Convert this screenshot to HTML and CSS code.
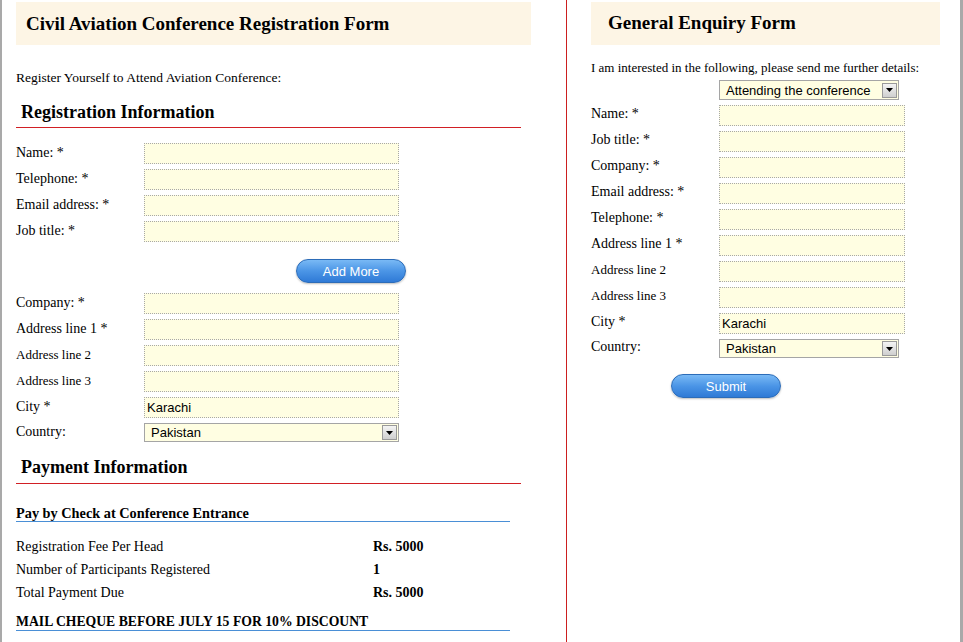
FILE: index.html
```html
<!DOCTYPE html>
<html>
<head>
<meta charset="utf-8">
<title>Civil Aviation Conference</title>
<link rel="stylesheet" href="styles.css">
</head>
<body>
<div class="page">
  <section class="panel panel-left">
    <div class="title-box"><h1>Civil Aviation Conference Registration Form</h1></div>
    <p class="intro intro-left">Register Yourself to Attend Aviation Conference:</p>
    <h2 class="section-head">Registration Information</h2>
    <div class="grid grid-left first-grid">
      <label>Name: *</label><input class="field" type="text">
      <label>Telephone: *</label><input class="field" type="text">
      <label>Email address: *</label><input class="field" type="text">
      <label>Job title: *</label><input class="field" type="text">
    </div>
    <div class="add-row"><button class="pill" type="button">Add More</button></div>
    <div class="grid grid-left">
      <label>Company: *</label><input class="field" type="text">
      <label>Address line 1 *</label><input class="field" type="text">
      <label class="small">Address line 2</label><input class="field" type="text">
      <label class="small">Address line 3</label><input class="field" type="text">
      <label>City *</label><input class="field" type="text" value="Karachi">
      <label>Country:</label>
      <div class="select"><span class="select-text">Pakistan</span><span class="arrow"><svg width="7" height="4" viewBox="0 0 7 4"><path d="M0 0h7L3.5 4z" fill="#000"/></svg></span></div>
    </div>
    <h2 class="section-head payment-head">Payment Information</h2>
    <h3 class="sub-head">Pay by Check at Conference Entrance</h3>
    <div class="pay-grid">
      <span>Registration Fee Per Head</span><b>Rs. 5000</b>
      <span>Number of Participants Registered</span><b>1</b>
      <span>Total Payment Due</span><b>Rs. 5000</b>
    </div>
    <h3 class="sub-head mail-head">MAIL CHEQUE BEFORE JULY 15 FOR 10% DISCOUNT</h3>
  </section>
  <section class="panel panel-right">
    <div class="title-box title-right"><h1>General Enquiry Form</h1></div>
    <p class="intro intro-right">I am interested in the following, please send me further details:</p>
    <div class="grid grid-right">
      <span></span>
      <div class="select select-interest"><span class="select-text">Attending the conference</span><span class="arrow"><svg width="7" height="4" viewBox="0 0 7 4"><path d="M0 0h7L3.5 4z" fill="#000"/></svg></span></div>
      <label>Name: *</label><input class="field" type="text">
      <label>Job title: *</label><input class="field" type="text">
      <label>Company: *</label><input class="field" type="text">
      <label>Email address: *</label><input class="field" type="text">
      <label>Telephone: *</label><input class="field" type="text">
      <label>Address line 1 *</label><input class="field" type="text">
      <label class="small">Address line 2</label><input class="field" type="text">
      <label class="small">Address line 3</label><input class="field" type="text">
      <label>City *</label><input class="field" type="text" value="Karachi">
      <label>Country:</label>
      <div class="select select-country-r"><span class="select-text">Pakistan</span><span class="arrow"><svg width="7" height="4" viewBox="0 0 7 4"><path d="M0 0h7L3.5 4z" fill="#000"/></svg></span></div>
    </div>
    <div class="submit-row"><button class="pill" type="button">Submit</button></div>
  </section>
</div>
</body>
</html>
```
FILE: styles.css
```css
* { box-sizing: border-box; }
html, body { margin: 0; padding: 0; background: #fff; }
body {
  font-family: "Liberation Serif", "Times New Roman", serif;
  color: #000;
  font-size: 14px;
}
.page {
  display: flex;
  min-height: 642px;
  width: 963px;
}
.panel { min-height: 642px; }
.panel-left {
  width: 567px;
  border-left: 2px solid #a9a9a9;
  border-right: 1px solid #cc1f1f;
  padding-left: 14px;
}
.panel-right {
  width: 396px;
  border-right: 3px solid #a9a9a9;
  padding-left: 24px;
}
.title-box {
  margin-top: 2px;
  height: 43px;
  background: #fdf5e5;
  display: flex;
  align-items: center;
}
.panel-left .title-box { width: 515px; padding-left: 10px; }
.title-right { width: 349px; padding-left: 17px; padding-bottom: 1px; }
h1 {
  margin: 0;
  font-size: 19px;
  font-weight: bold;
  line-height: 22px;
}
.intro {
  margin: 0;
  font-size: 13px;
  line-height: 16px;
}
.intro-left { margin-top: 24px; font-size: 13.5px; line-height: 17px; }
.intro-right { margin-top: 15px; }
.section-head {
  margin: 14px 0 0;
  width: 505px;
  font-size: 18px;
  line-height: 22px;
  padding: 1px 0 4px 5px;
  border-bottom: 1px solid #d11f24;
}
.payment-head { margin-top: 14px; padding-top: 0; padding-bottom: 5px; }
.grid {
  display: grid;
  row-gap: 5px;
  align-items: center;
}
.grid-left { grid-template-columns: 128px 255px; }
.grid-right { grid-template-columns: 128px 186px; margin-top: 4px; }
.first-grid { margin-top: 15px; }
.grid label { line-height: 16px; padding-bottom: 2px; }
.grid-right label { padding-bottom: 3px; }
.grid label.small { font-size: 13px; }
.field {
  height: 21px;
  width: 100%;
  margin: 0;
  border: 1px dotted #a8a8a8;
  background: #fffee2;
  font-family: "Liberation Sans", Arial, sans-serif;
  font-size: 13px;
  padding: 0 2px;
  color: #000;
}
.select {
  height: 19px;
  border: 1px solid #a5a5a5;
  background: #fffee2;
  display: flex;
  align-items: center;
  justify-content: space-between;
  padding: 0 1px 0 6px;
  font-family: "Liberation Sans", Arial, sans-serif;
  font-size: 13px;
}
.select-interest { width: 180px; height: 20px; }
.select-country-r { width: 180px; }
.select-text { line-height: 15px; }
.arrow {
  width: 15px;
  height: 15px;
  border: 1px solid #9a9a9a;
  background: linear-gradient(#f4f4f4, #cfcfcf);
  display: flex;
  align-items: center;
  justify-content: center;
}
.pill {
  width: 110px;
  height: 24px;
  border-radius: 12px;
  border: 1px solid #2c6cb8;
  background: linear-gradient(#79b9f5 0%, #4b95e6 50%, #2f7ad6 100%);
  color: #fff;
  font-family: "Liberation Sans", Arial, sans-serif;
  font-size: 13px;
  padding: 0;
  box-shadow: 0 1px 2px rgba(0,0,0,0.25);
}
.add-row { margin: 17px 0 10px 280px; }
.submit-row { margin: 16px 0 0 80px; }
.sub-head {
  margin: 21px 0 0;
  width: 494px;
  font-size: 14.3px;
  line-height: 16px;
  border-bottom: 1px solid #4a8fd6;
}
.pay-grid {
  display: grid;
  grid-template-columns: 357px auto;
  margin-top: 13px;
  line-height: 23px;
}
.pay-grid b { font-size: 14px; }
.mail-head { margin-top: 9px; line-height: 17px; font-size: 13.7px; }
```
